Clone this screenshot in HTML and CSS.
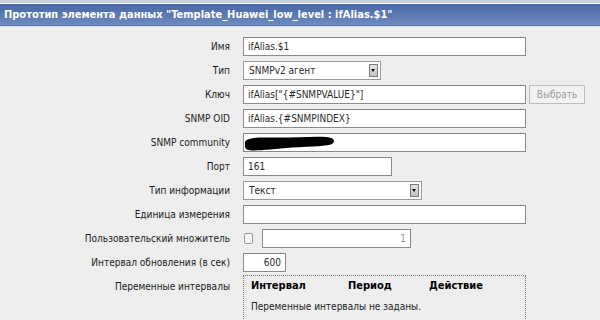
FILE: index.html
```html
<!DOCTYPE html>
<html lang="ru">
<head>
<meta charset="utf-8">
<link rel="stylesheet" href="styles.css">
</head>
<body>
<div class="header">
  <div class="title">Прототип элемента данных "Template_Huawei_low_level : ifAlias.$1"</div>
</div>
<div class="form">
  <div class="label">Имя</div>
  <div class="field"><div class="input w-long">ifAlias.$1</div></div>

  <div class="label">Тип</div>
  <div class="field"><div class="select w-type"><span>SNMPv2 агент</span><span class="arrow"></span></div></div>

  <div class="label">Ключ</div>
  <div class="field"><div class="input w-long">ifAlias["{#SNMPVALUE}"]</div><div class="button">Выбрать</div></div>

  <div class="label">SNMP OID</div>
  <div class="field"><div class="input w-long">ifAlias.{#SNMPINDEX}</div></div>

  <div class="label">SNMP community</div>
  <div class="field"><div class="input w-long redacted">
    <svg class="blot" width="96" height="20" viewBox="0 0 96 20"><path d="M3 10 C2 4 12 3 30 3.5 C50 4 70 2 84 3 C92 3.5 94 7 90 10 C86 12 70 12.5 50 13.5 C30 15 12 17.5 6 16 C3 15 3 13 3 10 Z" fill="#000"/></svg>
  </div></div>

  <div class="label">Порт</div>
  <div class="field"><div class="input w-port">161</div></div>

  <div class="label">Тип информации</div>
  <div class="field"><div class="select w-info"><span>Текст</span><span class="arrow"></span></div></div>

  <div class="label">Единица измерения</div>
  <div class="field"><div class="input w-long"></div></div>

  <div class="label">Пользовательский множитель</div>
  <div class="field"><span class="checkbox"></span><div class="input w-mult num disabled">1</div></div>

  <div class="label">Интервал обновления (в сек)</div>
  <div class="field"><div class="input w-delay num">600</div></div>

  <div class="label">Переменные интервалы</div>
  <div class="field"><div class="intervals">
    <div class="int-head"><span class="c1">Интервал</span><span class="c2">Период</span><span class="c3">Действие</span></div>
    <div class="int-empty">Переменные интервалы не заданы.</div>
  </div></div>
</div>
</body>
</html>
```
FILE: styles.css
```css
html, body {
  margin: 0;
  padding: 0;
  background: #eeeeee;
  font-family: "DejaVu Sans Condensed", "DejaVu Sans", sans-serif;
  font-size: 10px;
  color: #1a1a1a;
  height: 320px;
  overflow: hidden;
}
.header {
  border-top: 3px solid #c8d1dd;
  border-bottom: 1px solid #d6dde8;
  background: #ffffff;
  padding: 1px 0 0 0;
}
.title {
  height: 21px;
  line-height: 21px;
  padding-left: 4px;
  background: linear-gradient(#4766a4, #6f8cc0);
  border-bottom: 1px solid #5a74a8;
  color: #ffffff;
  font-weight: bold;
  font-size: 11px;
  white-space: nowrap;
}
.form {
  display: grid;
  grid-template-columns: 230px 1fr;
  column-gap: 13px;
  row-gap: 5px;
  padding-top: 10px;
}
.label {
  text-align: right;
  height: 19px;
  line-height: 19px;
  white-space: nowrap;
}
.field {
  display: flex;
  align-items: center;
  gap: 3px;
  height: 19px;
}
.input, .select {
  box-sizing: border-box;
  height: 19px;
  line-height: 17px;
  border: 1px solid #8a8a8a;
  background: #ffffff;
  padding: 0 4px;
  color: #2a2a2a;
  white-space: nowrap;
  position: relative;
}
.w-long { width: 283px; }
.w-port { width: 149px; }
.w-mult { width: 149px; }
.w-delay { width: 43px; }
.num { text-align: right; }
.disabled { color: #999999; }
.select {
  display: flex;
  align-items: center;
  justify-content: space-between;
  padding: 0 2px 0 5px;
  border-color: #9a9a9a;
}
.w-type { width: 138px; }
.w-info { width: 179px; }
.arrow {
  width: 9px;
  height: 13px;
  box-sizing: border-box;
  background: linear-gradient(#e4e4e4, #c4c4c4);
  border: 1px solid #7a7a7a;
  position: relative;
}
.arrow::after {
  content: "";
  position: absolute;
  left: 1px;
  top: 4px;
  border-left: 2.5px solid transparent;
  border-right: 2.5px solid transparent;
  border-top: 3px solid #000;
}
.button {
  box-sizing: border-box;
  height: 19px;
  width: 56px;
  line-height: 17px;
  border: 1px solid #bdbdbd;
  background: #f2f2f2;
  color: #9c9c9c;
  text-align: center;
}
.checkbox {
  box-sizing: border-box;
  width: 9px;
  height: 11px;
  border: 1px solid #9a9a9a;
  border-radius: 2px;
  background: #f8f8f8;
  margin: 0 6px 0 1px;
}
.redacted { overflow: visible; }
.blot {
  position: absolute;
  left: -2px;
  top: 0px;
}
.intervals {
  box-sizing: border-box;
  width: 283px;
  height: 60px;
  border: 1px dotted #777777;
  border-bottom: none;
  padding: 3px 7px;
  align-self: flex-start;
  margin-top: -2px;
}
.int-head {
  display: flex;
  font-weight: bold;
  font-size: 11px;
  color: #000;
  height: 14px;
  line-height: 14px;
}
.c1 { width: 97px; }
.c2 { width: 81px; }
.int-empty {
  margin-top: 7px;
  line-height: 14px;
  color: #222;
}
```
